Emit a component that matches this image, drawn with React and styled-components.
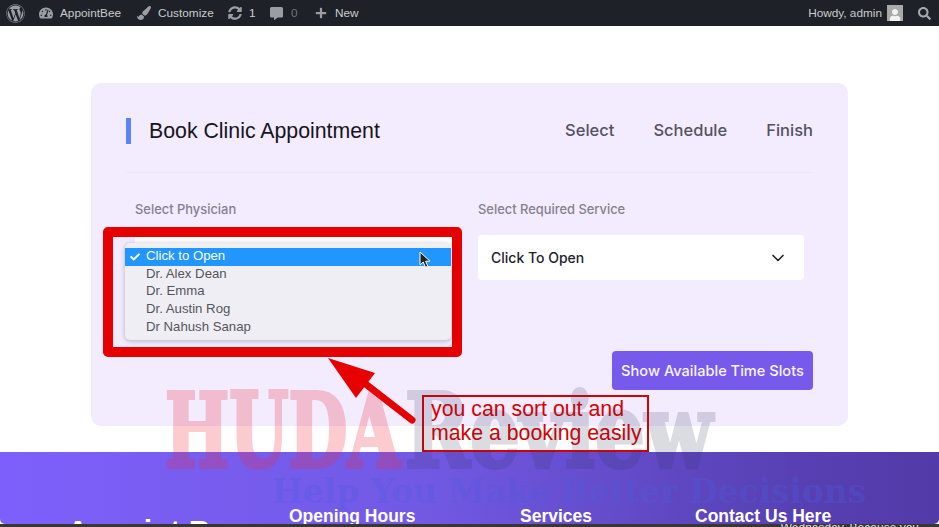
import React from 'react';
import styled, { createGlobalStyle } from 'styled-components';
import { FaWordpress, FaPaintBrush, FaSyncAlt, FaPlus, FaSearch, FaTachometerAlt, FaUser, FaCheck, FaCommentAlt } from 'react-icons/fa';
import { FiChevronDown } from 'react-icons/fi';

const GlobalStyle = createGlobalStyle`
  html, body {
    margin: 0;
    padding: 0;
    background: #fff;
  }
  * {
    box-sizing: border-box;
  }
`;

const physicians = ['Dr. Alex Dean', 'Dr. Emma', 'Dr. Austin Rog', 'Dr Nahush Sanap'];

export default function App() {
  return (
    <Page>
      <GlobalStyle />
      <AdminBar>
        <AdminGroup>
          <AdminItem $gap={0} $width={33}>
            <FaWordpress size={19} />
          </AdminItem>
          <AdminItem $gap={7} $width={98}>
            <FaTachometerAlt size={14} />
            <span>AppointBee</span>
          </AdminItem>
          <AdminItem $gap={7} $width={91}>
            <FaPaintBrush size={14} />
            <span>Customize</span>
          </AdminItem>
          <AdminItem $gap={7} $width={42}>
            <FaSyncAlt size={14} />
            <span>1</span>
          </AdminItem>
          <AdminItem $gap={8} $width={45}>
            <FaCommentAlt size={13} />
            <Muted>0</Muted>
          </AdminItem>
          <AdminItem $gap={8} $width={44}>
            <FaPlus size={12} />
            <span>New</span>
          </AdminItem>
        </AdminGroup>
        <AdminGroup>
          <Howdy>Howdy, admin</Howdy>
          <Avatar>
            <FaUser size={12} />
          </Avatar>
          <SearchIcon>
            <FaSearch size={13} />
          </SearchIcon>
        </AdminGroup>
      </AdminBar>

      <Main>
        <Card>
          <CardHeader>
            <TitleGroup>
              <TitleBar />
              <Title>Book Clinic Appointment</Title>
            </TitleGroup>
            <Steps>
              <Step>Select</Step>
              <Step>Schedule</Step>
              <Step>Finish</Step>
            </Steps>
          </CardHeader>
          <Fields>
            <Field>
              <FieldLabel $indent={9}>Select Physician</FieldLabel>
              <PhysicianSelect />
            </Field>
            <Field>
              <FieldLabel $indent={0}>Select Required Service</FieldLabel>
              <SelectBox>
                Click To Open
                <FiChevronDown size={20} />
              </SelectBox>
            </Field>
          </Fields>
          <Actions>
            <SlotsButton>Show Available Time Slots</SlotsButton>
          </Actions>
        </Card>
      </Main>

      <Footer>
        <FooterBrandColumn>
          <Brand>Appoint B</Brand>
        </FooterBrandColumn>
        <FooterColumn $width={231}>
          <FooterHeading>Opening Hours</FooterHeading>
        </FooterColumn>
        <FooterColumn $width={175}>
          <FooterHeading>Services</FooterHeading>
        </FooterColumn>
        <FooterColumn $width={200}>
          <FooterHeading>Contact Us Here</FooterHeading>
        </FooterColumn>
      </Footer>
      <BottomStrip>
        <span>Wednesday. Because you</span>
      </BottomStrip>

      <HighlightFrame>
        <Dropdown>
          <OptionSelected>
            <FaCheck size={10} />
            Click to Open
            <Cursor viewBox="0 0 12 18">
              <path d="M1 1v13l3.2-3 2.2 5.2 2.4-1-2.2-5H11z" fill="#222" stroke="#fff" strokeWidth="1" />
            </Cursor>
          </OptionSelected>
          {physicians.map((name) => (
            <Option key={name}>{name}</Option>
          ))}
        </Dropdown>
      </HighlightFrame>

      <Arrow viewBox="0 0 100 80">
        <path d="M84 62 L35 24" stroke="#e60000" strokeWidth="7" strokeLinecap="round" />
        <path d="M0 0 L47 15 L28 40 Z" fill="#e60000" />
      </Arrow>
      <Callout>
        you can sort out and
        <br />
        make a booking easily
      </Callout>

      <Watermark>
        <WatermarkName>
          <Huda>HUDA</Huda>
          <Review>Review</Review>
        </WatermarkName>
        <Tagline>Help You Make Better Decisions</Tagline>
      </Watermark>
    </Page>
  );
}

const Page = styled.div`
  position: relative;
  display: flex;
  flex-direction: column;
  width: 939px;
  height: 527px;
  overflow: hidden;
  background: #fff;
  font-family: 'Inter', 'Liberation Sans', sans-serif;
`;

const AdminBar = styled.header`
  display: flex;
  align-items: center;
  justify-content: space-between;
  flex: none;
  height: 26px;
  padding: 0 8px 0 6px;
  background: #1e2228;
  color: #c9cbcd;
  font-family: 'Liberation Sans', Arial, sans-serif;
  font-size: 11.8px;
`;

const AdminGroup = styled.div`
  display: flex;
  align-items: center;
`;

const AdminItem = styled.div`
  display: flex;
  align-items: center;
  gap: ${(props) => props.$gap}px;
  width: ${(props) => props.$width}px;
  white-space: nowrap;
  svg {
    flex: none;
    color: #9a9ea3;
  }
`;

const Muted = styled.span`
  color: #6f7479;
`;

const Howdy = styled.span`
  margin-right: 5px;
`;

const Avatar = styled.div`
  display: flex;
  align-items: flex-end;
  justify-content: center;
  width: 16px;
  height: 16px;
  margin-right: 15px;
  background: #a9a9a9;
  color: #f2f2f2;
  overflow: hidden;
`;

const SearchIcon = styled.div`
  display: flex;
  color: #a7aaad;
`;

const Main = styled.main`
  flex: none;
  height: 426px;
  padding: 57px 91px 0;
  background: #fff;
`;

const Card = styled.section`
  display: flex;
  flex-direction: column;
  height: 343px;
  padding: 35px 35px 0;
  background: #f3ebfe;
  border-radius: 10px;
`;

const CardHeader = styled.div`
  display: flex;
  align-items: flex-start;
  justify-content: space-between;
  flex: none;
  height: 55px;
  border-bottom: 1px solid #e8eafc;
`;

const TitleGroup = styled.div`
  display: flex;
  align-items: center;
  gap: 18px;
`;

const TitleBar = styled.div`
  width: 5px;
  height: 26px;
  background: #5b84fb;
`;

const Title = styled.h1`
  margin: 0;
  color: #15151c;
  font-family: 'Liberation Sans', Arial, sans-serif;
  font-size: 21.3px;
  font-weight: 400;
  line-height: 25px;
`;

const Steps = styled.nav`
  display: flex;
  gap: 39px;
`;

const Step = styled.span`
  color: #54525f;
  font-size: 16.5px;
  font-weight: 500;
  line-height: 25px;
`;

const Fields = styled.div`
  display: grid;
  grid-template-columns: 343px 326px;
  column-gap: 9px;
  margin-top: 28px;
`;

const Field = styled.div`
  display: flex;
  flex-direction: column;
`;

const FieldLabel = styled.label`
  height: 17px;
  margin: 0 0 17px ${(props) => props.$indent}px;
  color: #85818f;
  font-size: 12.9px;
  font-weight: 500;
  line-height: 17px;
`;

const PhysicianSelect = styled.div`
  width: 325px;
  height: 45px;
  margin-left: 9px;
  background: #fff;
  border-radius: 4px;
`;

const SelectBox = styled.div`
  display: flex;
  align-items: center;
  justify-content: space-between;
  height: 45px;
  padding: 0 16px 0 13px;
  background: #fff;
  border-radius: 4px;
  color: #23222c;
  font-size: 14px;
  font-weight: 500;
`;

const Actions = styled.div`
  display: flex;
  justify-content: flex-end;
  margin-top: 71px;
`;

const SlotsButton = styled.button`
  width: 201px;
  height: 39px;
  padding: 0;
  border: none;
  border-radius: 4px;
  background: #7759ec;
  color: #f7f5ff;
  font-family: inherit;
  font-size: 14.6px;
  font-weight: 500;
`;

const Footer = styled.footer`
  display: flex;
  flex: none;
  height: 72px;
  overflow: hidden;
  background: linear-gradient(90deg, #7d60fb 0%, #7259e4 45%, #5a42b8 80%, #523aa8 100%);
  border-radius: 0 0 5px 5px;
`;

const FooterColumn = styled.div`
  flex: none;
  width: ${(props) => props.$width}px;
  padding-top: 54px;
`;

const FooterBrandColumn = styled.div`
  flex: none;
  width: 289px;
  padding: 62px 0 0 67px;
`;

const Brand = styled.div`
  color: #fff;
  font-family: 'Liberation Sans', Arial, sans-serif;
  font-size: 30px;
  font-weight: 700;
  white-space: nowrap;
`;

const FooterHeading = styled.h3`
  margin: 0;
  color: #fff;
  font-family: 'Liberation Sans', Arial, sans-serif;
  font-size: 17.5px;
  font-weight: 700;
  line-height: 20px;
  white-space: nowrap;
`;

const BottomStrip = styled.div`
  display: flex;
  justify-content: flex-end;
  flex: none;
  height: 3px;
  padding-right: 20px;
  overflow: hidden;
  background: #3a3633;
  color: #ddd;
  font-family: 'Liberation Sans', Arial, sans-serif;
  font-size: 12px;
  line-height: 8px;
`;

const HighlightFrame = styled.div`
  position: absolute;
  left: 103px;
  top: 227px;
  width: 359px;
  height: 130px;
  border: 10px solid #e60000;
  border-radius: 5px;
`;

const Dropdown = styled.div`
  position: absolute;
  left: 12px;
  top: 6px;
  width: 326px;
  height: 97px;
  padding-top: 5px;
  background: #f0eef5;
  border-radius: 5px;
  box-shadow: 0 1px 5px rgba(60, 60, 90, 0.35);
  color: #55555a;
  font-family: 'Liberation Sans', Arial, sans-serif;
  font-size: 13.2px;
`;

const Option = styled.div`
  height: 17.7px;
  padding-left: 21px;
  line-height: 16.5px;
`;

const OptionSelected = styled(Option)`
  position: relative;
  display: flex;
  align-items: flex-start;
  padding-left: 5px;
  gap: 6px;
  background: #2196ff;
  color: #fff;
  svg:first-child {
    margin-top: 4px;
  }
`;

const Cursor = styled.svg`
  position: absolute;
  left: 294px;
  top: 3px;
  width: 12px;
  height: 18px;
`;

const Arrow = styled.svg`
  position: absolute;
  left: 328px;
  top: 358px;
  width: 100px;
  height: 80px;
`;

const Callout = styled.div`
  position: absolute;
  left: 422px;
  top: 395px;
  width: 227px;
  height: 57px;
  padding: 0 0 0 7px;
  border: 2px solid #d90000;
  color: #d90000;
  font-family: 'Liberation Sans', Arial, sans-serif;
  font-size: 21.3px;
  line-height: 24px;
  white-space: nowrap;
`;

const Watermark = styled.div`
  position: absolute;
  left: 165px;
  top: 383px;
  width: 720px;
  pointer-events: none;
  font-family: 'DejaVu Serif', serif;
  font-weight: 700;
`;

const WatermarkName = styled.div`
  display: flex;
  height: 92px;
  font-size: 103px;
  line-height: 96px;
  white-space: nowrap;
`;

const Huda = styled.span`
  display: inline-block;
  width: 240px;
  color: #f02a3c;
  opacity: 0.24;
  -webkit-text-stroke: 4px #f02a3c;
  transform-origin: left top;
  transform: scaleX(0.66);
`;

const Review = styled.span`
  display: inline-block;
  color: #32325a;
  opacity: 0.17;
  -webkit-text-stroke: 4px #32325a;
  transform-origin: left top;
  transform: scaleX(0.76);
`;

const Tagline = styled.div`
  margin-left: 107px;
  color: rgba(70, 95, 225, 0.3);
  font-size: 32.8px;
  line-height: 34px;
  white-space: nowrap;
`;
